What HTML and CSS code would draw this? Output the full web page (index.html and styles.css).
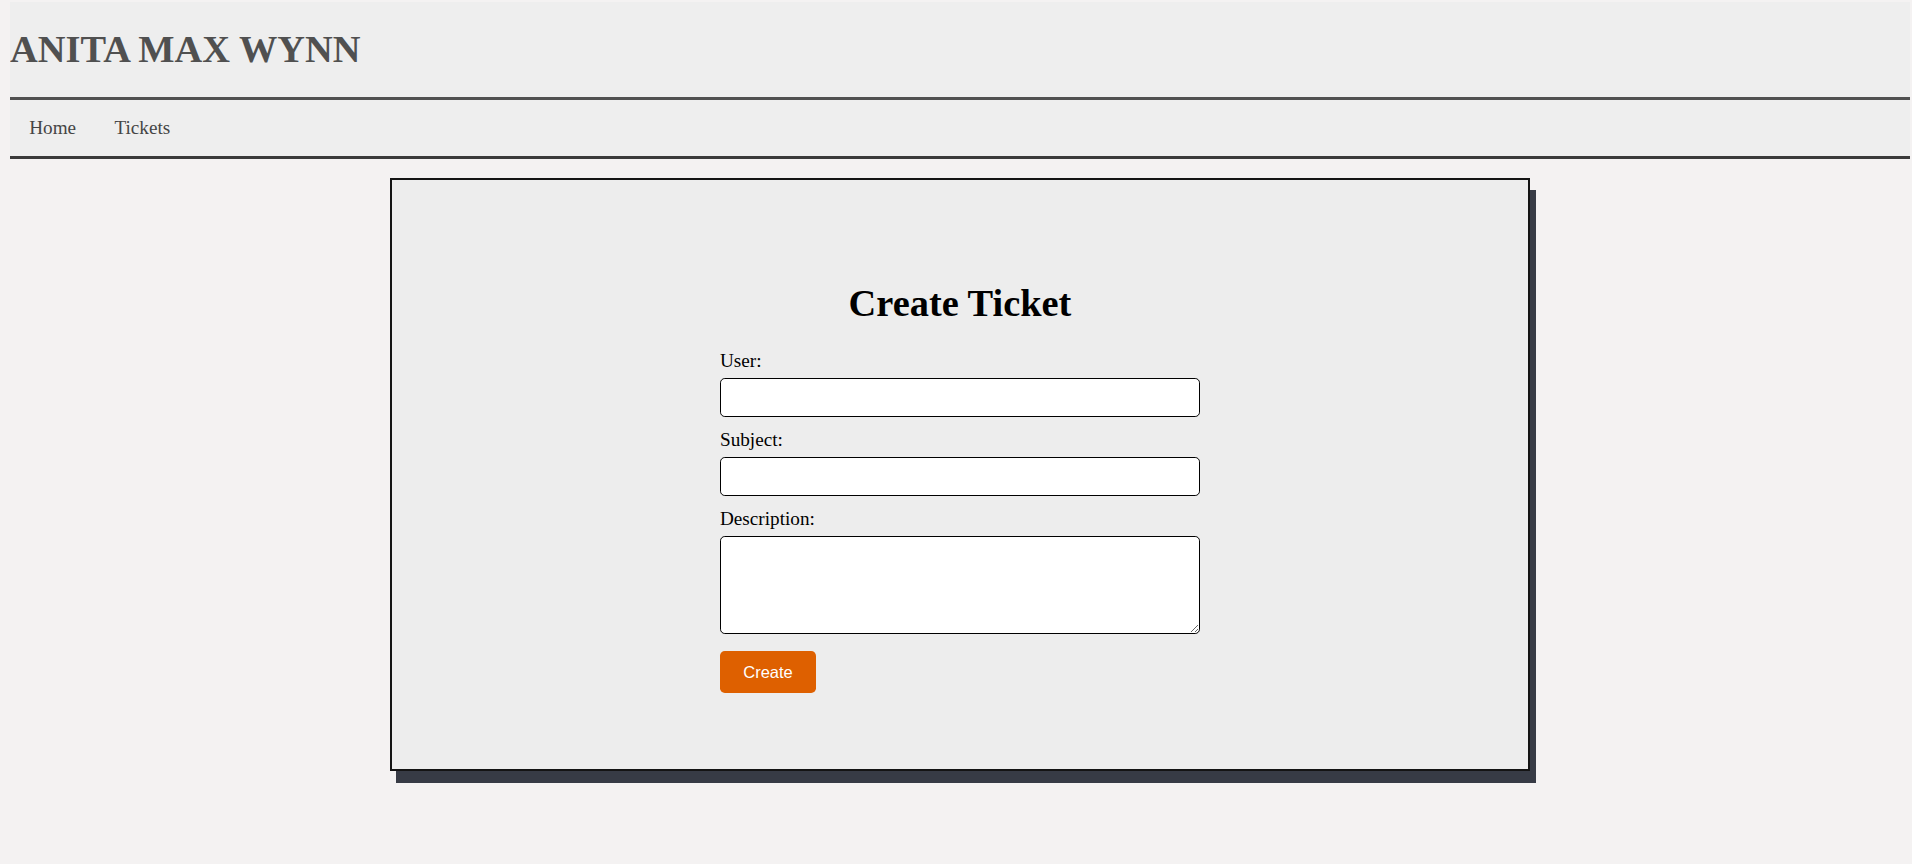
FILE: index.html
```html
<!DOCTYPE html>
<html lang="en">
<head>
<meta charset="utf-8">
<title>Create Ticket</title>
<link rel="stylesheet" href="styles.css">
</head>
<body>
<header class="site-header">
  <h1 class="brand">ANITA MAX WYNN</h1>
  <nav class="nav">
    <a class="nav-link" href="#">Home</a>
    <a class="nav-link" href="#">Tickets</a>
  </nav>
</header>
<div class="card-wrap">
  <main class="card">
    <form class="ticket-form">
      <h2 class="form-title">Create Ticket</h2>
      <label class="field-label" for="user">User:</label>
      <input class="field-input" id="user" type="text">
      <label class="field-label" for="subject">Subject:</label>
      <input class="field-input" id="subject" type="text">
      <label class="field-label" for="desc">Description:</label>
      <textarea class="field-textarea" id="desc"></textarea>
      <button class="submit-btn" type="button">Create</button>
    </form>
  </main>
</div>
</body>
</html>
```
FILE: styles.css
```css
* { box-sizing: border-box; }
html { background: #f4f2f2; min-height: 100%; }
body {
  margin: 2px 2px 0 10px;
  font-family: "Liberation Serif", "Times New Roman", serif;
  font-size: 19.2px;
  color: #000;
}
.site-header {
  background: #eeeeee;
}
.brand {
  margin: 0;
  padding: 26px 0 26.5px;
  font-size: 38.4px;
  font-weight: bold;
  line-height: 42.5px;
  color: #505050;
  border-bottom: 3px solid #505050;
}
.nav {
  display: flex;
  padding: 17px 0;
  border-bottom: 3px solid #3a3a3a;
  line-height: 22px;
}
.nav-link {
  padding: 0 19.2px;
  color: #454545;
  text-decoration: none;
}
.card-wrap {
  padding: 19px 0 40px;
}
.card {
  width: 1140px;
  margin: 0 auto;
  background: #ededed;
  border: 2px solid #141414;
  box-shadow: 6px 12px 0 0 #373b45;
  padding: 76.8px 0 76px;
}
.ticket-form {
  width: 480px;
  margin: 0 auto;
  display: flex;
  flex-direction: column;
  align-items: flex-start;
}
.form-title {
  align-self: stretch;
  text-align: center;
  margin: 25.5px 0 25.7px;
  font-size: 38.4px;
  line-height: 42.5px;
  font-weight: bold;
}
.field-label {
  line-height: 22px;
  margin-bottom: 6px;
}
.field-input,
.field-textarea {
  width: 480px;
  border: 1px solid #000;
  border-radius: 4.8px;
  background: #fff;
  font: inherit;
}
.field-input {
  height: 39px;
  margin-bottom: 12px;
}
.field-textarea {
  display: block;
  height: 98px;
  margin: 0 0 17px;
}
.submit-btn {
  width: 96px;
  height: 42px;
  border: none;
  border-radius: 4.8px;
  background: #de6000;
  color: #fff;
  font-family: "Liberation Sans", Arial, sans-serif;
  font-size: 16.5px;
  padding: 0;
}
```
